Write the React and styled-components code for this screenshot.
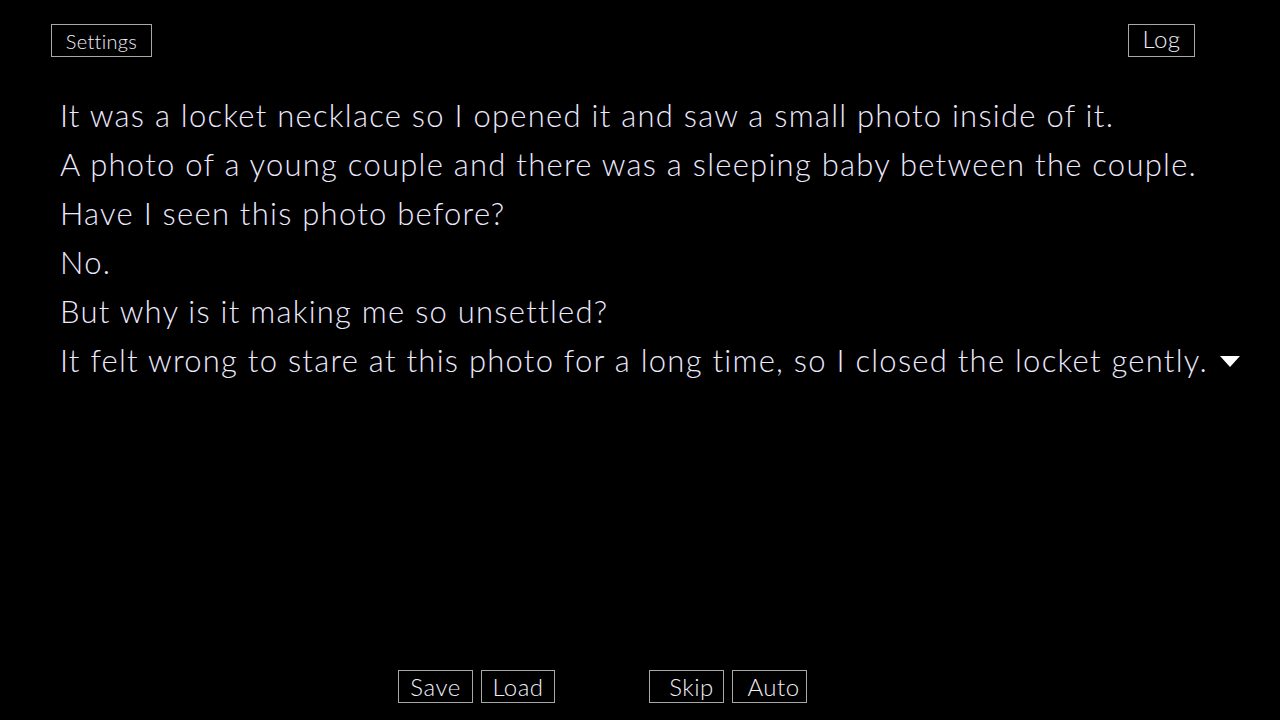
import React from "react";
import styled, { createGlobalStyle } from "styled-components";

const Global = createGlobalStyle`
  html, body { margin: 0; padding: 0; background: #000; }
  body { font-family: Lato, "Open Sans", sans-serif; }
`;

const Screen = styled.div`
  width: 1280px;
  height: 720px;
  background: #000;
  display: flex;
  flex-direction: column;
  box-sizing: border-box;
  overflow: hidden;
`;

const TopBar = styled.div`
  display: flex;
  justify-content: space-between;
  align-items: flex-start;
  padding: 24px 85px 0 51px;
`;

const FrameButton = styled.button`
  box-sizing: border-box;
  height: 33px;
  width: ${(p) => p.$w}px;
  padding: 0 0 ${(p) => p.$pb || 0}px ${(p) => p.$pl || 0}px;
  background: #000;
  border: 1px solid #a8a8a8;
  color: #f0eef8;
  font-family: Lato, sans-serif;
  font-weight: 300;
  font-size: ${(p) => p.$fs || 24}px;
  letter-spacing: ${(p) => p.$ls ?? 0.5}px;
  display: flex;
  align-items: center;
  justify-content: center;
  cursor: pointer;
`;

const Dialogue = styled.div`
  padding: 34px 0 0 60px;
  display: flex;
  flex-direction: column;
  flex: 1;
`;

const Line = styled.div`
  font-family: Lato, sans-serif;
  font-weight: 300;
  font-size: 31px;
  line-height: 49px;
  color: #ece9ff;
  letter-spacing: 1.25px;
  white-space: nowrap;
  display: flex;
  align-items: center;
`;

const Arrow = styled.span`
  display: inline-block;
  width: 0;
  height: 0;
  margin-left: 12px;
  margin-top: 2px;
  border-left: 10px solid transparent;
  border-right: 10px solid transparent;
  border-top: 11px solid #ffffff;
`;

const BottomBar = styled.div`
  display: flex;
  padding: 0 0 17px 398px;
`;

const Group = styled.div`
  display: flex;
  gap: 8px;
  margin-right: ${(p) => p.$mr || 0}px;
`;

const lines = [
  "It was a locket necklace so I opened it and saw a small photo inside of it.",
  "A photo of a young couple and there was a sleeping baby between the couple.",
  "Have I seen this photo before?",
  "No.",
  "But why is it making me so unsettled?",
];

export default function App() {
  return (
    <>
      <Global />
      <Screen>
        <TopBar>
          <FrameButton $w={101} $fs={20} $ls={0.3}>Settings</FrameButton>
          <FrameButton $w={67} $fs={24} $pb={4}>Log</FrameButton>
        </TopBar>
        <Dialogue>
          {lines.map((l, i) => (
            <Line key={i}>{l}</Line>
          ))}
          <Line>
            It felt wrong to stare at this photo for a long time, so I closed the locket gently.
            <Arrow />
          </Line>
        </Dialogue>
        <BottomBar>
          <Group $mr={94}>
            <FrameButton $w={75}>Save</FrameButton>
            <FrameButton $w={74}>Load</FrameButton>
          </Group>
          <Group>
            <FrameButton $w={75} $pl={10}>Skip</FrameButton>
            <FrameButton $w={75} $pl={8}>Auto</FrameButton>
          </Group>
        </BottomBar>
      </Screen>
    </>
  );
}
